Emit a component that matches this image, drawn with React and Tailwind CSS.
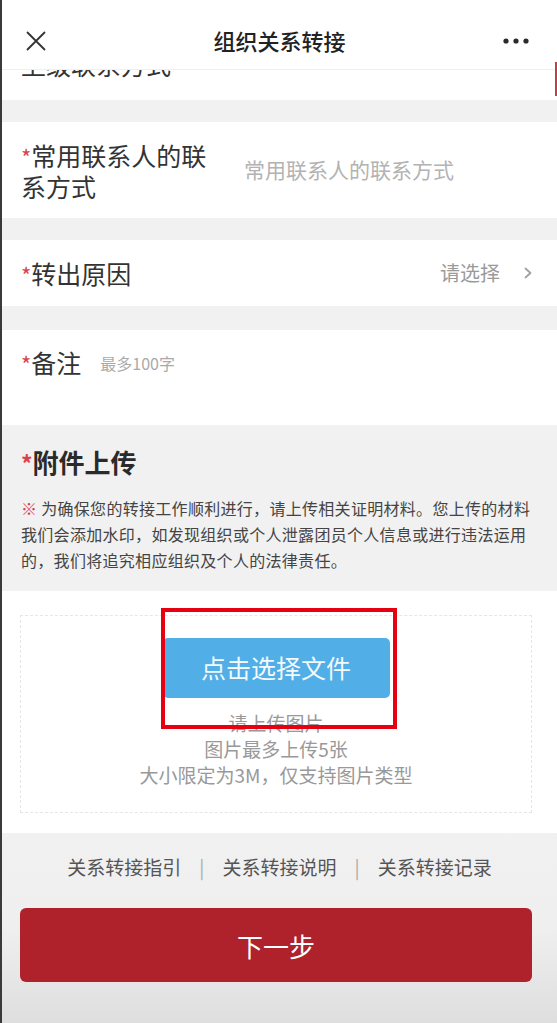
import React from 'react';

const Star = () => <span className="text-[#d9434b] text-[0.88em]">*</span>;

const CloseIcon = () => (
  <svg width="20" height="20" viewBox="0 0 20 20" fill="none" stroke="#333" strokeWidth="1.8" strokeLinecap="round">
    <path d="M1.5 1.5 L18.5 18.5 M18.5 1.5 L1.5 18.5" />
  </svg>
);

const MoreIcon = () => (
  <svg width="26" height="6" viewBox="0 0 26 6" fill="#2a2a2a">
    <circle cx="3" cy="3" r="2.6" />
    <circle cx="13" cy="3" r="2.6" />
    <circle cx="23" cy="3" r="2.6" />
  </svg>
);

const Chevron = () => (
  <svg width="8" height="12" viewBox="0 0 8 12" fill="none" stroke="#a0a0a0" strokeWidth="1.8" strokeLinecap="round" strokeLinejoin="round">
    <path d="M1.5 1.5 L6.5 6 L1.5 10.5" />
  </svg>
);

const App = () => {
  return (
    <div className="relative min-h-screen bg-[#f1f1f1] border-l-2 border-[#3a3a3a] overflow-hidden font-['Noto_Sans_CJK_SC','Noto_Sans',sans-serif] text-[#333]">
      {/* scroll indicator */}
      <div className="absolute right-0 top-[62px] w-[2px] h-[34px] bg-[#c0404a]" />

      {/* header */}
      <div className="h-[70px] pt-[12px] bg-white grid grid-cols-[1fr_auto_1fr] items-center border-b border-[#f0f0f0]">
        <div className="pl-[24px] flex items-center">
          <CloseIcon />
        </div>
        <div className="text-[22px] font-medium text-[#222]">组织关系转接</div>
        <div className="pr-[28px] flex justify-end">
          <MoreIcon />
        </div>
      </div>

      {/* row cut off under header */}
      <div className="h-[30px] bg-white overflow-hidden px-[19px]">
        <div className="-mt-[18px] text-[25px] leading-[25px]">上级联系方式</div>
      </div>

      <div className="h-[22px]" />

      <div className="h-[96px] bg-white flex items-center px-[19px]">
        <div className="w-[200px] text-[25px] leading-[30px]">
          <Star />常用联系人的联系方式
        </div>
        <div className="ml-[23px] text-[21px] text-[#b3b3b3]">常用联系人的联系方式</div>
      </div>

      <div className="h-[22px]" />

      <div className="h-[66px] bg-white flex items-center justify-between pl-[19px] pr-[25px]">
        <div className="text-[25px] leading-[30px]">
          <Star />转出原因
        </div>
        <div className="flex items-center">
          <span className="text-[20px] text-[#9a9a9a]">请选择</span>
          <span className="ml-[24px] flex items-center">
            <Chevron />
          </span>
        </div>
      </div>

      <div className="h-[24px]" />

      <div className="h-[95px] bg-white px-[19px] pt-[17px]">
        <div className="flex items-center">
          <div className="text-[25px] leading-[30px]">
            <Star />备注
          </div>
          <div className="ml-[19px] text-[16px] text-[#aaa]">最多100字</div>
        </div>
      </div>

      {/* attachment */}
      <div className="px-[19px] pt-[20px] pb-[18px]">
        <div className="text-[26px] leading-[34px] font-bold text-[#2a2a2a]">
          <Star />附件上传
        </div>
        <p className="mt-[15px] text-[16px] leading-[26px] tracking-[0.3px] text-[#444]">
          <span className="text-[#d9434b]">※</span> 为确保您的转接工作顺利进行，请上传相关证明材料。您上传的材料我们会添加水印，如发现组织或个人泄露团员个人信息或进行违法运用的，我们将追究相应组织及个人的法律责任。
        </p>
      </div>

      <div className="bg-white pt-[24px] pb-[20px] pl-[18px] pr-[25px]">
        <div className="h-[198px] border border-dashed border-[#e6e6e6] flex flex-col items-center pt-[22px]">
          <div className="relative">
            <div className="w-[227px] h-[60px] rounded-[5px] bg-[#52aee6] text-[25px] text-[#f2f9fd] flex items-center justify-center">
              点击选择文件
            </div>
            <div className="absolute -left-[2px] -top-[30px] w-[236px] h-[121px] border-[4px] border-[#e60012] z-10" />
          </div>
          <div className="mt-[12px] text-[19px] leading-[26px] text-[#999] text-center">
            <div>请上传图片</div>
            <div>图片最多上传5张</div>
            <div>大小限定为3M，仅支持图片类型</div>
          </div>
        </div>
      </div>

      <div className="bg-linear-to-b from-[#f1f1f1] via-[#efefef] to-[#dedede] pt-[21px] pb-[42px]">
        <div className="flex items-center justify-center text-[19px] leading-[26px] text-[#555]">
          <span>关系转接指引</span>
          <span className="px-[18px] text-[#aaa]">|</span>
          <span>关系转接说明</span>
          <span className="px-[18px] text-[#aaa]">|</span>
          <span>关系转接记录</span>
        </div>
        <div className="mt-[28px] ml-[18px] mr-[25px] h-[74px] rounded-[6px] bg-[#b0222b] flex items-center justify-center text-[26px] text-white">
          下一步
        </div>
      </div>
    </div>
  );
};

export default App;
